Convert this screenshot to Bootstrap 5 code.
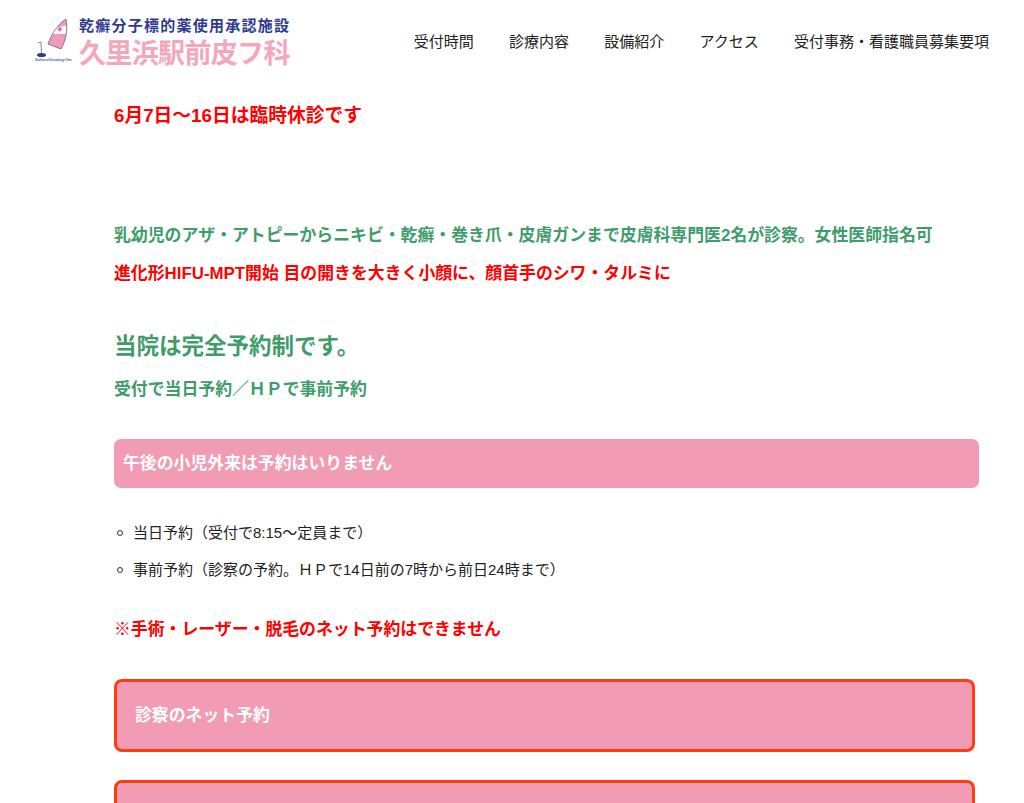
<!DOCTYPE html>
<html lang="ja">
<head>
<meta charset="utf-8">
<title>久里浜駅前皮フ科</title>
<link href="https://cdn.jsdelivr.net/npm/bootstrap@5.3.0/dist/css/bootstrap.min.css" rel="stylesheet">
<style>
html,body{height:803px;overflow:hidden}
body{font-family:"Liberation Sans","Noto Sans CJK JP",sans-serif;color:#222;background:#fff;font-size:15px}
.site-head{height:83px;padding:0 35px 0 30px}
.logo-box{width:262px;height:50px;margin-top:15px}
.logo-sail{width:48px;height:50px;flex:none;margin-right:1px}
.logo-cap{font-family:"Liberation Serif",serif;font-size:4px;font-style:italic;fill:#2f3a8f}
.logo-top{color:#2f3a8f;font-size:15px;font-weight:700;line-height:18px;white-space:nowrap;letter-spacing:1.25px;margin-top:2px}
.logo-main{color:#f4a6bd;font-size:27px;font-weight:700;line-height:30px;white-space:nowrap;letter-spacing:-.65px;margin-top:4px}
.menu-link{color:#222;font-size:15px;text-decoration:none;white-space:nowrap;line-height:20px}
.site-menu{gap:35.250px;margin-top:32px}
.page-main{padding:0 45px 0 114px}
.note-red{color:#f00;font-weight:700;font-size:18.750px;line-height:26px;margin:0}
.note-sm{font-size:16.875px}
.note-green{color:#3f9c6b;font-weight:700;font-size:16.875px;line-height:24px;margin:0}
.note-lg{font-size:22.500px;line-height:32px}
.head-bar{background:#f29bb5;color:#fff;font-weight:700;font-size:16.875px;height:49px;line-height:50px;border-radius:7px;padding-left:9px}
.plain-list{list-style:none;padding-left:3px;margin:0;font-size:15px}
.plain-list li{line-height:20px;margin-bottom:16px;gap:10px}
.plain-list li+li{margin-top:17px}
.plain-list li::before{content:"";width:6px;height:6px;border:1.5px solid #333;border-radius:50%;flex:none}
.book-box{background:#f29bb5;color:#fff;font-weight:700;font-size:16.875px;border:3px solid #ff3c10;border-radius:8px;height:73px;margin-right:4px;padding-left:18px;line-height:67px}
</style>
</head>
<body>
<header class="site-head d-flex justify-content-between align-items-start">
  <a href="#" class="logo-box d-flex text-decoration-none">
    <svg class="logo-sail" viewBox="0 0 48 50" aria-hidden="true">
      <path d="M36 4C28 9 22 18 18 29L31 34C36 25 38 15 36 4Z" fill="#f29bb5"/>
      <path d="M25.500 12.500L36.800 10.500L36.600 18.800L21 19Z" fill="#fff"/>
      <path d="M36 4C28 9 22 18 18 29L31 34C36 25 38 15 36 4Z" fill="none" stroke="#5a5fa5" stroke-width=".8"/>
      <path d="M27.500 13.500h4.500v1.600h-4.500zM29 12h1.600v4.600h-1.600z" fill="#f0607f"/>
      <path d="M11 27L11.500 39M11 27l-3 1" stroke="#667" stroke-width=".8" fill="none"/>
      <ellipse cx="11.500" cy="40" rx="4.500" ry="2" fill="#2f3a8f"/>
      <text class="logo-cap" x="5" y="46" textLength="37">Kurihama Dermatology Clinic</text>
    </svg>
    <span class="d-flex flex-column">
      <span class="logo-top">乾癬分子標的薬使用承認施設</span>
      <span class="logo-main">久里浜駅前皮フ科</span>
    </span>
  </a>
  <nav class="site-menu d-flex">
    <a class="menu-link" href="#">受付時間</a>
    <a class="menu-link" href="#">診療内容</a>
    <a class="menu-link" href="#">設備紹介</a>
    <a class="menu-link" href="#">アクセス</a>
    <a class="menu-link" href="#">受付事務・看護職員募集要項</a>
  </nav>
</header>
<main class="page-main">
  <p class="note-red" style="margin-top:20px">6月7日～16日は臨時休診です</p>
  <p class="note-green" style="margin-top:95px">乳幼児のアザ・アトピーからニキビ・乾癬・巻き爪・皮膚ガンまで皮膚科専門医2名が診察。女性医師指名可</p>
  <p class="note-red note-sm" style="margin-top:13px">進化形HIFU-MPT開始 目の開きを大きく小顔に、顔首手のシワ・タルミに</p>
  <p class="note-green note-lg" style="margin-top:44px">当院は完全予約制です。</p>
  <p class="note-green" style="margin-top:15px">受付で当日予約／ＨＰで事前予約</p>
  <div class="head-bar" style="margin-top:37px">午後の小児外来は予約はいりません</div>
  <ul class="plain-list" style="margin-top:35px">
    <li class="d-flex align-items-center">当日予約（受付で8:15～定員まで）</li>
    <li class="d-flex align-items-center">事前予約（診察の予約。ＨＰで14日前の7時から前日24時まで）</li>
  </ul>
  <p class="note-red note-sm" style="margin-top:37px">※手術・レーザー・脱毛のネット予約はできません</p>
  <div class="book-box" style="margin-top:36px">診察のネット予約</div>
  <div class="book-box" style="margin-top:28px"></div>
</main>
</body>
</html>
